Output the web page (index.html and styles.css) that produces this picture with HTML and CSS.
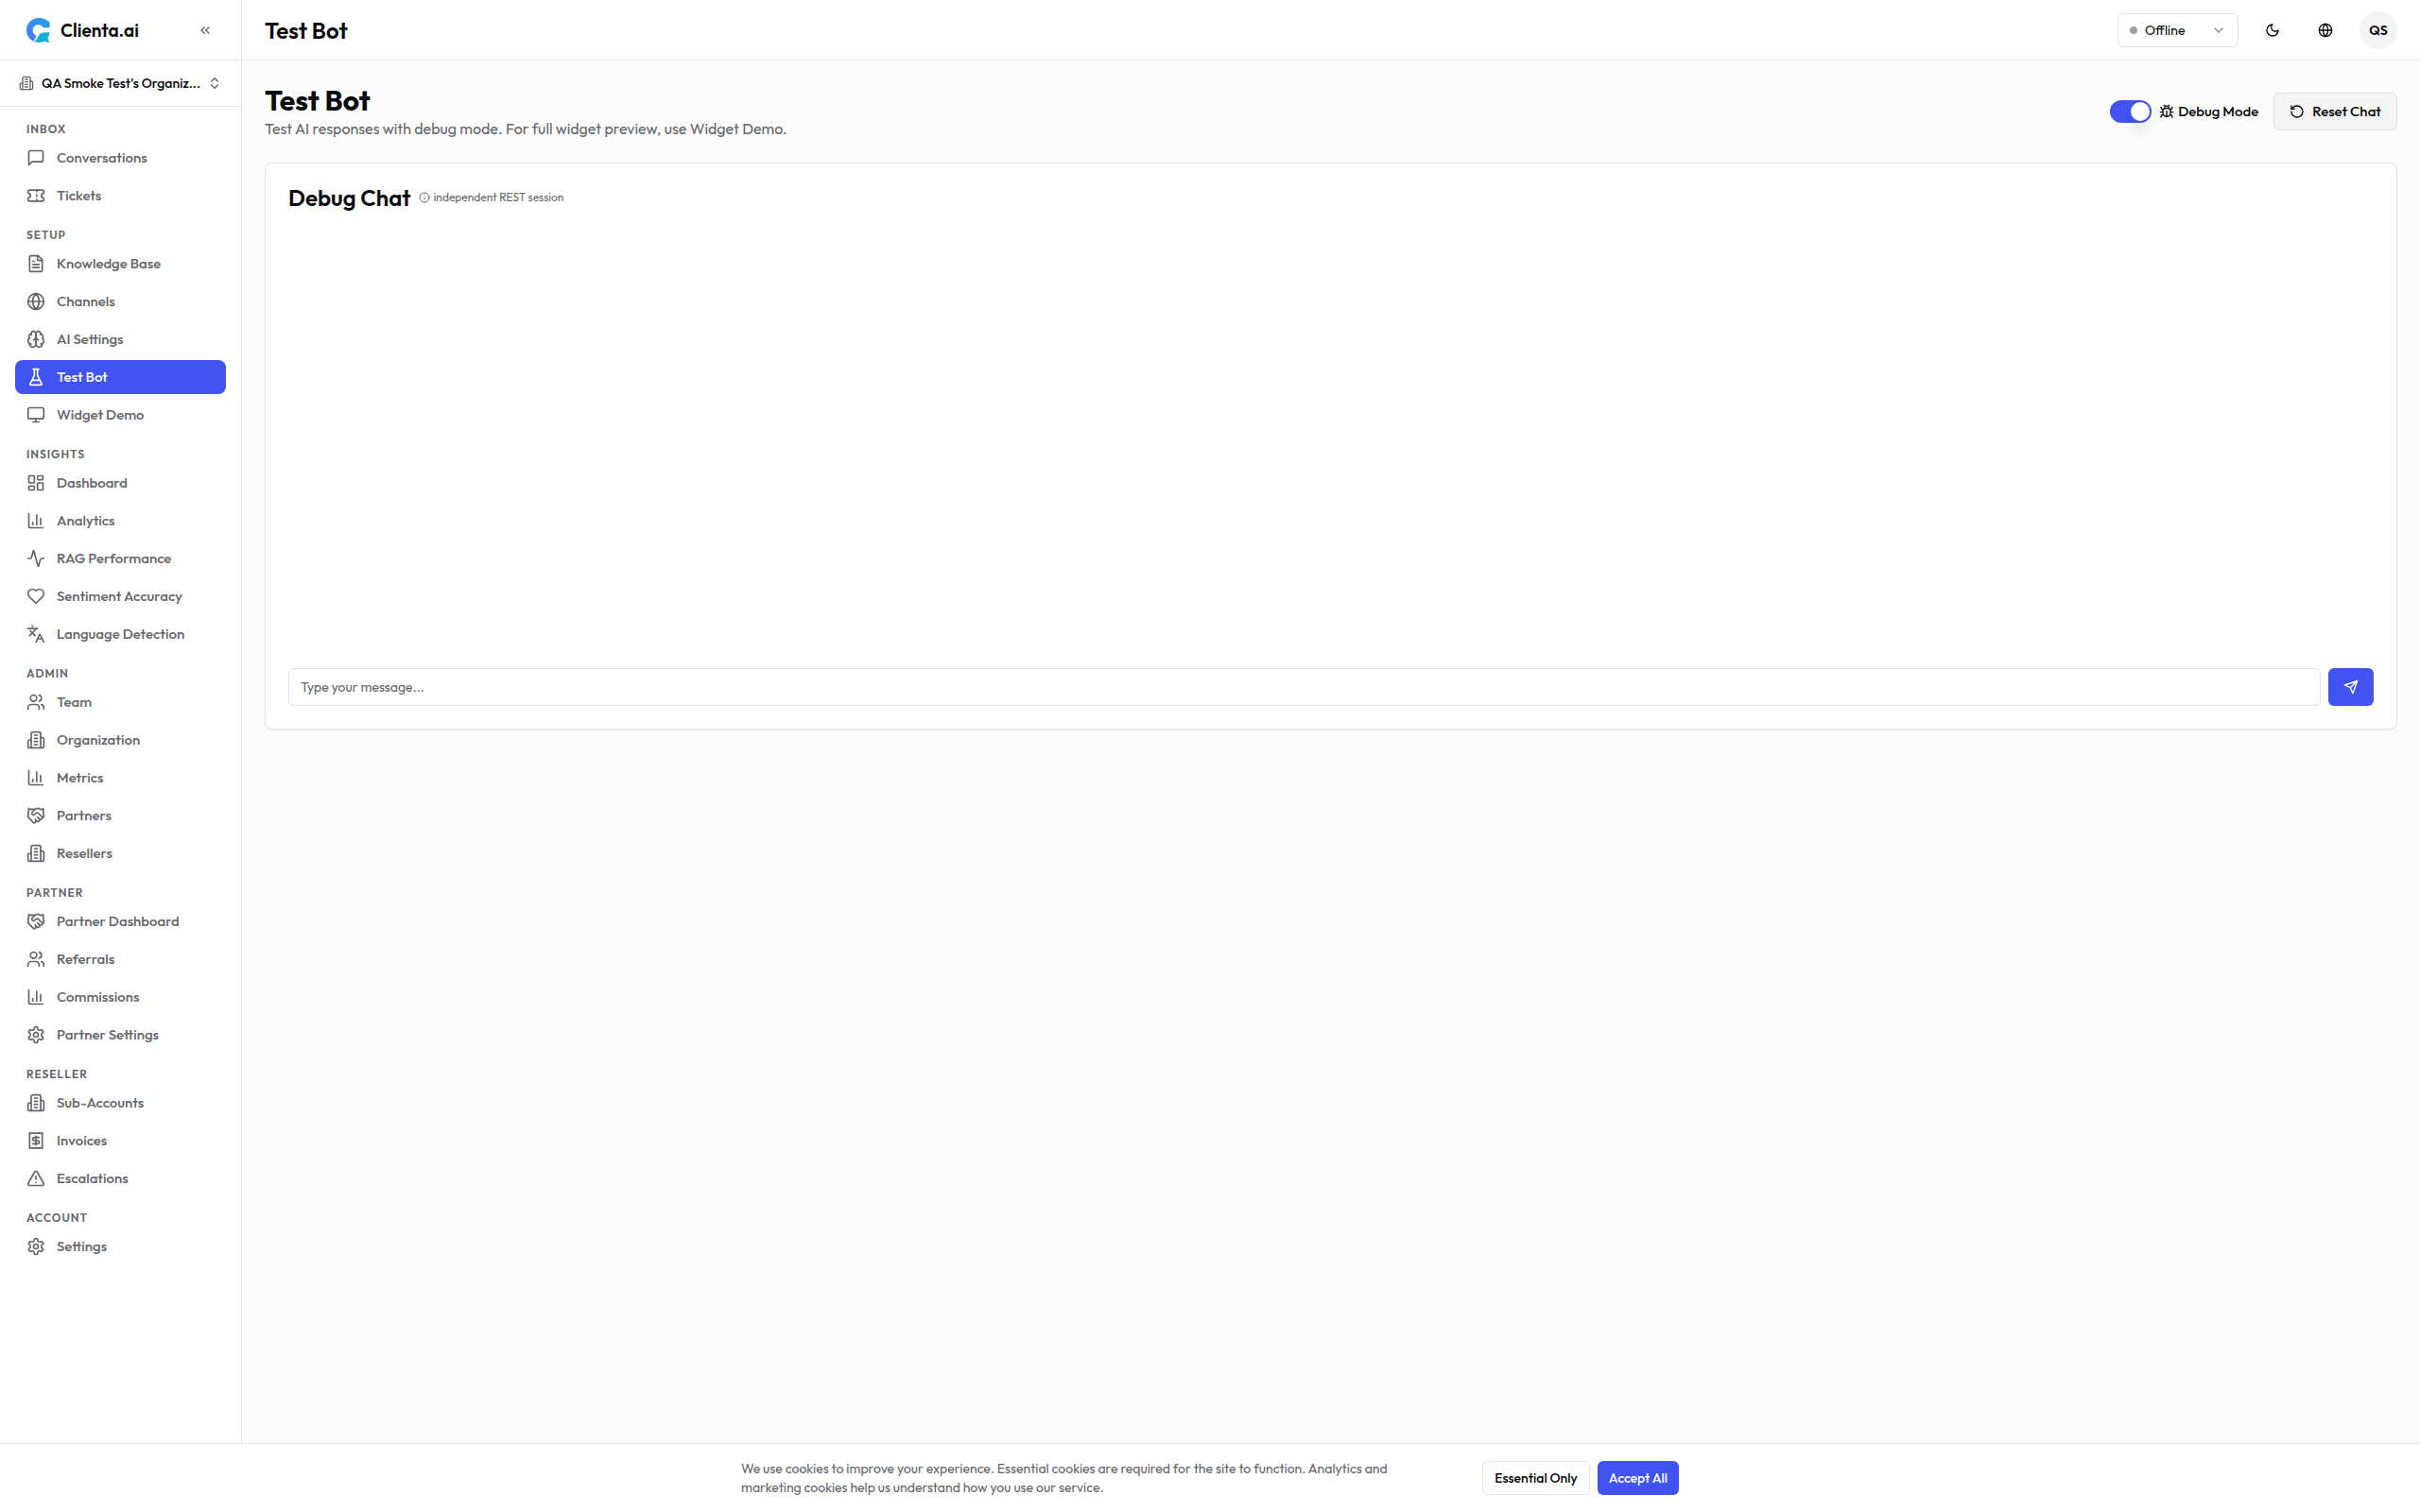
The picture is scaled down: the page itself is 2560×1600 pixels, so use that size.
FILE: index.html
```html
<!DOCTYPE html>
<html lang="en">
<head>
    <meta charset="UTF-8">
    <meta name="viewport" content="width=device-width, initial-scale=1.0">
    <title>Test Bot - Clienta.ai</title>
    <link rel="stylesheet" href="styles.css">
</head>
<body>

    <!-- Icon sprite -->
    <svg class="sprite" aria-hidden="true">
        <symbol id="i-message" viewBox="0 0 24 24"><path d="M21 15a2 2 0 0 1-2 2H7l-4 4V5a2 2 0 0 1 2-2h14a2 2 0 0 1 2 2z"/></symbol>
        <symbol id="i-ticket" viewBox="0 0 24 24"><path d="M2 9a3 3 0 0 1 0 6v2a2 2 0 0 0 2 2h16a2 2 0 0 0 2-2v-2a3 3 0 0 1 0-6V7a2 2 0 0 0-2-2H4a2 2 0 0 0-2 2Z"/><path d="M13 5v2M13 17v2M13 11v2"/></symbol>
        <symbol id="i-file" viewBox="0 0 24 24"><path d="M15 2H6a2 2 0 0 0-2 2v16a2 2 0 0 0 2 2h12a2 2 0 0 0 2-2V7Z"/><path d="M14 2v4a2 2 0 0 0 2 2h4M10 9H8M16 13H8M16 17H8"/></symbol>
        <symbol id="i-globe" viewBox="0 0 24 24"><circle cx="12" cy="12" r="10"/><path d="M12 2a14.5 14.5 0 0 0 0 20 14.5 14.5 0 0 0 0-20M2 12h20"/></symbol>
        <symbol id="i-brain" viewBox="0 0 24 24"><path d="M12 5a3 3 0 1 0-5.997.125 4 4 0 0 0-2.526 5.77 4 4 0 0 0 .556 6.588A4 4 0 1 0 12 18Z"/><path d="M12 5a3 3 0 1 1 5.997.125 4 4 0 0 1 2.526 5.77 4 4 0 0 1-.556 6.588A4 4 0 1 1 12 18Z"/><path d="M15 13a4.500 4.500 0 0 1-3-4 4.500 4.500 0 0 1-3 4M17.599 6.500a3 3 0 0 0 .399-1.375M6.003 5.125A3 3 0 0 0 6.401 6.500M3.477 10.896a4 4 0 0 1 .585-.396M19.938 10.500a4 4 0 0 1 .585.396M6 18a4 4 0 0 1-1.967-.516M19.967 17.484A4 4 0 0 1 18 18"/></symbol>
        <symbol id="i-flask" viewBox="0 0 24 24"><path d="M10 2v7.527a2 2 0 0 1-.211.896L4.720 20.550a1 1 0 0 0 .9 1.450h12.760a1 1 0 0 0 .9-1.450l-5.069-10.127A2 2 0 0 1 14 9.527V2M8.500 2h7M7 16h10"/></symbol>
        <symbol id="i-monitor" viewBox="0 0 24 24"><rect x="2" y="3" width="20" height="14" rx="2"/><path d="M8 21h8M12 17v4"/></symbol>
        <symbol id="i-dashboard" viewBox="0 0 24 24"><rect x="3" y="3" width="7" height="9" rx="1"/><rect x="14" y="3" width="7" height="5" rx="1"/><rect x="14" y="12" width="7" height="9" rx="1"/><rect x="3" y="16" width="7" height="5" rx="1"/></symbol>
        <symbol id="i-chart" viewBox="0 0 24 24"><path d="M3 3v16a2 2 0 0 0 2 2h16M18 17V9M13 17V5M8 17v-3"/></symbol>
        <symbol id="i-activity" viewBox="0 0 24 24"><path d="M22 12h-2.480a2 2 0 0 0-1.930 1.460l-2.350 8.360a.25.25 0 0 1-.48 0L9.240 2.180a.25.25 0 0 0-.48 0l-2.350 8.360A2 2 0 0 1 4.490 12H2"/></symbol>
        <symbol id="i-heart" viewBox="0 0 24 24"><path d="M19 14c1.490-1.460 3-3.210 3-5.500A5.500 5.500 0 0 0 16.500 3c-1.760 0-3 .5-4.500 2-1.500-1.500-2.740-2-4.500-2A5.500 5.500 0 0 0 2 8.500c0 2.300 1.500 4.050 3 5.500l7 7Z"/></symbol>
        <symbol id="i-languages" viewBox="0 0 24 24"><path d="m5 8 6 6M4 14l6-6 2-3M2 5h12M7 2h1M22 22l-5-10-5 10M14 18h6"/></symbol>
        <symbol id="i-users" viewBox="0 0 24 24"><path d="M16 21v-2a4 4 0 0 0-4-4H6a4 4 0 0 0-4 4v2"/><circle cx="9" cy="7" r="4"/><path d="M22 21v-2a4 4 0 0 0-3-3.870M16 3.130a4 4 0 0 1 0 7.750"/></symbol>
        <symbol id="i-building" viewBox="0 0 24 24"><path d="M6 22V4a2 2 0 0 1 2-2h8a2 2 0 0 1 2 2v18Z"/><path d="M6 12H4a2 2 0 0 0-2 2v6a2 2 0 0 0 2 2h2M18 9h2a2 2 0 0 1 2 2v9a2 2 0 0 1-2 2h-2M10 6h4M10 10h4M10 14h4M10 18h4"/></symbol>
        <symbol id="i-handshake" viewBox="0 0 24 24"><path d="m11 17 2 2a1 1 0 1 0 3-3"/><path d="m14 14 2.500 2.500a1 1 0 1 0 3-3l-3.880-3.880a3 3 0 0 0-4.240 0l-.88.88a1 1 0 1 1-3-3l2.810-2.810a5.790 5.790 0 0 1 7.060-.87l.47.28a2 2 0 0 0 1.420.25L21 4"/><path d="m21 3 1 11h-2M3 3 2 14l6.500 6.500a1 1 0 1 0 3-3M3 4h8"/></symbol>
        <symbol id="i-settings" viewBox="0 0 24 24"><path d="M12.220 2h-.44a2 2 0 0 0-2 2v.18a2 2 0 0 1-1 1.730l-.43.25a2 2 0 0 1-2 0l-.15-.08a2 2 0 0 0-2.730.73l-.22.38a2 2 0 0 0 .73 2.730l.15.1a2 2 0 0 1 1 1.720v.51a2 2 0 0 1-1 1.740l-.15.09a2 2 0 0 0-.73 2.730l.22.38a2 2 0 0 0 2.730.73l.15-.08a2 2 0 0 1 2 0l.43.25a2 2 0 0 1 1 1.730V20a2 2 0 0 0 2 2h.44a2 2 0 0 0 2-2v-.18a2 2 0 0 1 1-1.730l.43-.25a2 2 0 0 1 2 0l.15.08a2 2 0 0 0 2.730-.73l.22-.39a2 2 0 0 0-.73-2.730l-.15-.08a2 2 0 0 1-1-1.740v-.5a2 2 0 0 1 1-1.740l.15-.09a2 2 0 0 0 .73-2.730l-.22-.38a2 2 0 0 0-2.730-.73l-.15.08a2 2 0 0 1-2 0l-.43-.25a2 2 0 0 1-1-1.730V4a2 2 0 0 0-2-2z"/><circle cx="12" cy="12" r="3"/></symbol>
        <symbol id="i-receipt" viewBox="0 0 24 24"><path d="M4 2v20l2-1 2 1 2-1 2 1 2-1 2 1 2-1 2 1V2l-2 1-2-1-2 1-2-1-2 1-2-1-2 1Z"/><path d="M16 8h-6a2 2 0 1 0 0 4h4a2 2 0 1 1 0 4H8M12 17.500v-11"/></symbol>
        <symbol id="i-alert" viewBox="0 0 24 24"><path d="m21.730 18-8-14a2 2 0 0 0-3.480 0l-8 14A2 2 0 0 0 4 21h16a2 2 0 0 0 1.730-3M12 9v4M12 17h.01"/></symbol>
        <symbol id="i-collapse" viewBox="0 0 24 24"><path d="m11 17-5-5 5-5M18 17l-5-5 5-5"/></symbol>
        <symbol id="i-updown" viewBox="0 0 24 24"><path d="m7 15 5 5 5-5M7 9l5-5 5 5"/></symbol>
        <symbol id="i-down" viewBox="0 0 24 24"><path d="m6 9 6 6 6-6"/></symbol>
        <symbol id="i-moon" viewBox="0 0 24 24"><path d="M12 3a6 6 0 0 0 9 9 9 9 0 1 1-9-9Z"/></symbol>
        <symbol id="i-bug" viewBox="0 0 24 24"><path d="m8 2 1.880 1.880M14.120 3.880 16 2M9 7.130v-1a3 3 0 1 1 6 0v1"/><path d="M12 20c-3.300 0-6-2.700-6-6v-3a4 4 0 0 1 4-4h4a4 4 0 0 1 4 4v3c0 3.300-2.700 6-6 6M12 20v-9M6.530 9C4.600 8.800 3 7.100 3 5M6 13H2M3 21c0-2.100 1.700-3.900 3.800-4M20.970 5c0 2.100-1.600 3.800-3.500 4M22 13h-4M17.200 17c2.100.1 3.800 1.900 3.800 4"/></symbol>
        <symbol id="i-reset" viewBox="0 0 24 24"><path d="M3 12a9 9 0 1 0 9-9 9.750 9.750 0 0 0-6.740 2.740L3 8"/><path d="M3 3v5h5"/></symbol>
        <symbol id="i-info" viewBox="0 0 24 24"><circle cx="12" cy="12" r="10"/><path d="M12 16v-4M12 8h.01"/></symbol>
        <symbol id="i-send" viewBox="0 0 24 24"><path d="m22 2-7 20-4-9-9-4ZM22 2 11 13"/></symbol>
    </svg>

    <div class="app">

        <!-- Sidebar -->
        <aside class="sidebar">
            <div class="brand">
                <a class="brand-link" href="#">
                    <svg class="logo" viewBox="0 0 25 26" aria-hidden="true">
                        <defs>
                            <linearGradient id="logoGradient" x1="0" y1="1" x2="1" y2="0">
                                <stop offset="0" stop-color="#3b7cff"/>
                                <stop offset="0.45" stop-color="#3b8cf5"/>
                                <stop offset="1" stop-color="#219fe0"/>
                            </linearGradient>
                        </defs>
                        <path fill="url(#logoGradient)" d="M24.500 4.500V10.200H17.800C16.500 8.200 14.600 7.300 12.600 7.300 9.200 7.300 6.700 9.900 6.700 13.300c0 2.700 1.600 4.900 4 5.700L7.400 24.700C3 22.800 0 18.300 0 13 0 5.800 5.700 0 12.800 0c4.700 0 8.900 1.800 11.700 4.500Z"/>
                        <path fill="#12b0d6" d="M8 25.200c2.600-1.300 3.400-3.700 4.700-6.200 1.500-2.700 4-4 11.800-3.600-.1 1.800-.8 3.500-1.900 5 .1 2 .7 3.800 1.900 5.600-1.800 0-3.300-.5-4.500-1.500-3.400 1.500-7.500 1.900-12 .7Z"/>
                    </svg>
                    <span>Clienta.ai</span>
                </a>
                <button class="collapse" type="button" aria-label="Collapse sidebar"><svg class="icon-sm"><use href="#i-collapse"/></svg></button>
            </div>

            <button class="org-switch" type="button">
                <svg class="icon-sm"><use href="#i-building"/></svg>
                <span class="org-name">QA Smoke Test's Organiz...</span>
                <svg class="icon-sm"><use href="#i-updown"/></svg>
            </button>

            <nav class="nav">
                <h3>Inbox</h3>
                <a href="#"><svg class="icon"><use href="#i-message"/></svg>Conversations</a>
                <a href="#"><svg class="icon"><use href="#i-ticket"/></svg>Tickets</a>

                <h3>Setup</h3>
                <a href="#"><svg class="icon"><use href="#i-file"/></svg>Knowledge Base</a>
                <a href="#"><svg class="icon"><use href="#i-globe"/></svg>Channels</a>
                <a href="#"><svg class="icon"><use href="#i-brain"/></svg>AI Settings</a>
                <a href="#" class="active"><svg class="icon"><use href="#i-flask"/></svg>Test Bot</a>
                <a href="#"><svg class="icon"><use href="#i-monitor"/></svg>Widget Demo</a>

                <h3>Insights</h3>
                <a href="#"><svg class="icon"><use href="#i-dashboard"/></svg>Dashboard</a>
                <a href="#"><svg class="icon"><use href="#i-chart"/></svg>Analytics</a>
                <a href="#"><svg class="icon"><use href="#i-activity"/></svg>RAG Performance</a>
                <a href="#"><svg class="icon"><use href="#i-heart"/></svg>Sentiment Accuracy</a>
                <a href="#"><svg class="icon"><use href="#i-languages"/></svg>Language Detection</a>

                <h3>Admin</h3>
                <a href="#"><svg class="icon"><use href="#i-users"/></svg>Team</a>
                <a href="#"><svg class="icon"><use href="#i-building"/></svg>Organization</a>
                <a href="#"><svg class="icon"><use href="#i-chart"/></svg>Metrics</a>
                <a href="#"><svg class="icon"><use href="#i-handshake"/></svg>Partners</a>
                <a href="#"><svg class="icon"><use href="#i-building"/></svg>Resellers</a>

                <h3>Partner</h3>
                <a href="#"><svg class="icon"><use href="#i-handshake"/></svg>Partner Dashboard</a>
                <a href="#"><svg class="icon"><use href="#i-users"/></svg>Referrals</a>
                <a href="#"><svg class="icon"><use href="#i-chart"/></svg>Commissions</a>
                <a href="#"><svg class="icon"><use href="#i-settings"/></svg>Partner Settings</a>

                <h3>Reseller</h3>
                <a href="#"><svg class="icon"><use href="#i-building"/></svg>Sub-Accounts</a>
                <a href="#"><svg class="icon"><use href="#i-receipt"/></svg>Invoices</a>
                <a href="#"><svg class="icon"><use href="#i-alert"/></svg>Escalations</a>

                <h3>Account</h3>
                <a href="#"><svg class="icon"><use href="#i-settings"/></svg>Settings</a>
            </nav>
        </aside>

        <div class="content">
            <!-- Top bar -->
            <header class="topbar">
                <div class="topbar-title">Test Bot</div>
                <div class="topbar-actions">
                    <div class="status">
                        <span class="status-dot"></span>
                        <select aria-label="Status">
                            <option>Offline</option>
                            <option>Online</option>
                            <option>Away</option>
                        </select>
                        <svg class="icon-sm"><use href="#i-down"/></svg>
                    </div>
                    <button class="icon-button" type="button" aria-label="Toggle theme"><svg class="icon-sm"><use href="#i-moon"/></svg></button>
                    <button class="icon-button" type="button" aria-label="Language"><svg class="icon-sm"><use href="#i-globe"/></svg></button>
                    <button class="avatar" type="button">QS</button>
                </div>
            </header>

            <main class="main">
                <div class="page-head">
                    <div>
                        <h1>Test Bot</h1>
                        <p class="subtitle">Test AI responses with debug mode. For full widget preview, use Widget Demo.</p>
                    </div>
                    <div class="page-actions">
                        <div class="debug-toggle">
                            <input type="checkbox" role="switch" id="debugMode" class="switch" checked>
                            <label for="debugMode"><svg class="icon-sm"><use href="#i-bug"/></svg>Debug Mode</label>
                        </div>
                        <button class="button button-muted" type="button"><svg class="icon-sm"><use href="#i-reset"/></svg>Reset Chat</button>
                    </div>
                </div>

                <!-- Debug chat -->
                <section class="card">
                    <div class="card-head">
                        <h2>Debug Chat</h2>
                        <span class="hint"><svg class="icon-xs"><use href="#i-info"/></svg>independent REST session</span>
                    </div>
                    <div class="messages"></div>
                    <form class="composer">
                        <input type="text" aria-label="Message" placeholder="Type your message...">
                        <button class="send" type="submit" aria-label="Send"><svg class="icon-sm"><use href="#i-send"/></svg></button>
                    </form>
                </section>
            </main>
        </div>
    </div>

    <!-- Cookie banner -->
    <div class="cookies">
        <div class="cookies-inner">
            <p>We use cookies to improve your experience. Essential cookies are required for the site to function. Analytics and marketing cookies help us understand how you use our service.</p>
            <div class="cookies-actions">
                <button class="button button-outline" type="button">Essential Only</button>
                <button class="button button-primary" type="button">Accept All</button>
            </div>
        </div>
    </div>

</body>
</html>
```
FILE: styles.css
```css
:root {
    --primary: #4154f1;
    --text: #09090b;
    --muted: #636569;
    --border: #e4e4e7;
    --soft: #f4f4f5;
}

* {
    box-sizing: border-box;
}

body {
    margin: 0;
    font-family: Outfit, Lato, "Open Sans", sans-serif;
    font-size: 14px;
    line-height: 20px;
    color: var(--text);
    background-color: #fcfcfc;
}

h1, h2, h3, p {
    margin: 0;
}

a {
    color: inherit;
    text-decoration: none;
}

button, input, select {
    font: inherit;
    color: inherit;
}

button {
    padding: 0;
    border: none;
    background: none;
    cursor: pointer;
}

/* Icons */
svg {
    flex-shrink: 0;
    fill: none;
    stroke: currentColor;
    stroke-width: 2;
    stroke-linecap: round;
    stroke-linejoin: round;
}

.sprite {
    display: none;
}

.icon {
    width: 20px;
    height: 20px;
}

.icon-sm {
    width: 16px;
    height: 16px;
}

.icon-xs {
    width: 12px;
    height: 12px;
}

/* Page layout */
.app {
    display: flex;
    min-height: 100vh;
}

.content {
    flex: 1;
    min-width: 0;
}

/* Sidebar */
.sidebar {
    width: 256px;
    flex-shrink: 0;
    background-color: #fff;
    border-right: 1px solid var(--border);
}

.brand {
    display: flex;
    align-items: center;
    justify-content: space-between;
    height: 64px;
    padding: 0 28px;
    border-bottom: 1px solid var(--border);
}

.brand-link {
    display: flex;
    align-items: center;
    gap: 11px;
    font-size: 19px;
    font-weight: 600;
}

.logo {
    width: 25px;
    height: 26px;
    stroke: none;
}

.collapse {
    display: flex;
    padding: 2px;
    color: var(--muted);
}

.org-switch {
    display: flex;
    align-items: center;
    width: 100%;
    height: 49px;
    padding: 0 20px;
    border-bottom: 1px solid var(--border);
    font-weight: 500;
    text-align: left;
}

.org-switch svg {
    color: var(--muted);
}

.org-name {
    flex: 1;
    min-width: 0;
    margin-left: 8px;
    white-space: nowrap;
}

.nav {
    display: flex;
    flex-direction: column;
    gap: 4px;
    padding: 16px;
}

.nav h3 {
    margin-top: 12px;
    padding: 0 12px;
    font-size: 12px;
    font-weight: 600;
    line-height: 16px;
    letter-spacing: 1px;
    text-transform: uppercase;
    color: var(--muted);
}

.nav h3:first-child {
    margin-top: 0;
}

.nav a {
    display: flex;
    align-items: center;
    gap: 12px;
    height: 36px;
    padding: 0 12px;
    border-radius: 8px;
    font-size: 15px;
    font-weight: 500;
    color: var(--muted);
}

.nav a:hover {
    background-color: var(--soft);
}

.nav a.active {
    background-color: var(--primary);
    color: #fff;
}

/* Top bar */
.topbar {
    display: flex;
    align-items: center;
    justify-content: space-between;
    height: 64px;
    padding: 0 24px;
    background-color: #fff;
    border-bottom: 1px solid var(--border);
}

.topbar-title {
    font-size: 24px;
    font-weight: 600;
    line-height: 32px;
}

.topbar-actions {
    display: flex;
    align-items: center;
    gap: 16px;
}

.status {
    display: flex;
    align-items: center;
    gap: 8px;
    width: 128px;
    height: 36px;
    padding: 0 12px;
    border: 1px solid var(--border);
    border-radius: 6px;
}

.status select {
    flex: 1;
    min-width: 0;
    padding: 0;
    border: none;
    background: none;
    appearance: none;
}

.status svg {
    color: #8b8b8f;
}

.status-dot {
    width: 8px;
    height: 8px;
    border-radius: 50%;
    background-color: #a1a1a1;
}

.icon-button, .avatar {
    display: flex;
    align-items: center;
    justify-content: center;
    width: 40px;
    height: 40px;
    border-radius: 8px;
}

.avatar {
    border-radius: 50%;
    background-color: var(--soft);
    font-weight: 600;
}

/* Page header */
.main {
    padding: 24px;
}

.page-head {
    display: flex;
    align-items: center;
    justify-content: space-between;
    margin-bottom: 24px;
}

h1 {
    font-size: 30px;
    font-weight: 700;
    line-height: 36px;
}

.subtitle {
    font-size: 16px;
    line-height: 24px;
    color: var(--muted);
}

.page-actions, .debug-toggle, .debug-toggle label {
    display: flex;
    align-items: center;
}

.page-actions {
    gap: 16px;
}

.debug-toggle {
    gap: 8px;
}

.debug-toggle label {
    gap: 4px;
    font-size: 15px;
    font-weight: 500;
}

.switch {
    display: flex;
    align-items: center;
    width: 44px;
    height: 24px;
    margin: 0;
    padding: 2px;
    border-radius: 12px;
    background-color: #d4d4d8;
    appearance: none;
    cursor: pointer;
}

.switch::before {
    content: "";
    width: 20px;
    height: 20px;
    border-radius: 50%;
    background-color: #fff;
    box-shadow: 0 10px 15px rgba(0, 0, 0, 0.1);
}

.switch:checked {
    justify-content: flex-end;
    background-color: var(--primary);
}

/* Buttons */
.button {
    display: flex;
    align-items: center;
    justify-content: center;
    gap: 8px;
    height: 36px;
    padding: 0 12px;
    border-radius: 6px;
    font-weight: 500;
    white-space: nowrap;
}

.button-muted {
    height: 40px;
    padding: 0 16px;
    border: 1px solid #e0e0e2;
    background-color: var(--soft);
    font-size: 15px;
}

.button-outline {
    border: 1px solid var(--border);
    background-color: #fff;
}

.button-primary {
    background-color: var(--primary);
    color: #fff;
}

/* Debug chat card */
.card {
    display: flex;
    flex-direction: column;
    height: 600px;
    padding: 24px;
    border: 1px solid var(--border);
    border-radius: 8px;
    background-color: #fff;
    box-shadow: 0 1px 2px rgba(0, 0, 0, 0.05);
}

.card-head {
    display: flex;
    align-items: center;
    gap: 8px;
}

.card-head h2 {
    font-size: 24px;
    font-weight: 600;
    line-height: 24px;
}

.hint {
    display: flex;
    align-items: center;
    gap: 4px;
    font-size: 12px;
    line-height: 16px;
    color: var(--muted);
}

.messages {
    flex: 1;
    overflow-y: auto;
}

.composer {
    display: flex;
    gap: 8px;
}

.composer input {
    flex: 1;
    min-width: 0;
    height: 40px;
    padding: 0 12px;
    border: 1px solid var(--border);
    border-radius: 6px;
    background-color: #fff;
}

.composer input::placeholder {
    color: var(--muted);
    opacity: 1;
}

.send {
    display: flex;
    align-items: center;
    justify-content: center;
    width: 48px;
    height: 40px;
    border-radius: 6px;
    background-color: var(--primary);
    color: #fff;
}

/* Cookie banner */
.cookies {
    position: fixed;
    right: 0;
    bottom: 0;
    left: 0;
    border-top: 1px solid var(--border);
    background-color: #fff;
}

.cookies-inner {
    display: flex;
    align-items: center;
    justify-content: space-between;
    gap: 32px;
    max-width: 1024px;
    margin: 0 auto;
    padding: 16px;
    color: var(--muted);
}

.cookies-inner p {
    max-width: 740px;
}

.cookies-actions {
    display: flex;
    flex-shrink: 0;
    gap: 8px;
    color: var(--text);
}
```
